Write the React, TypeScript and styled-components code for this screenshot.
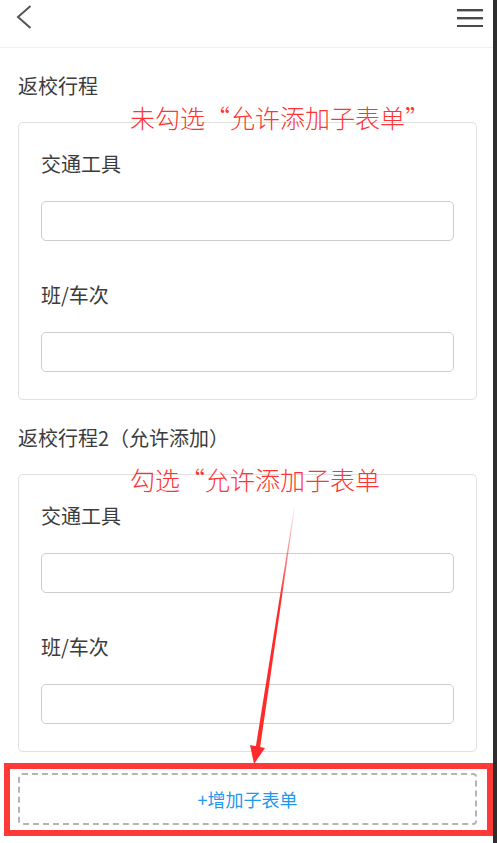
import styled, { createGlobalStyle } from 'styled-components';

const GlobalStyle = createGlobalStyle`
  html, body {
    margin: 0;
    padding: 0;
    background: #ffffff;
  }
  body {
    font-family: "Noto Sans CJK SC", "Noto Sans", sans-serif;
    color: #3c3c3c;
  }
  * {
    box-sizing: border-box;
  }
`;

const Screen = styled.div`
  position: relative;
  width: 497px;
  min-height: 843px;
  background: #fff;
  border-right: 4px solid #2e2e2e;
  overflow: hidden;
`;

const Header = styled.div`
  height: 48px;
  display: flex;
  justify-content: space-between;
  align-items: flex-start;
  padding: 5px 9px 0 16px;
  border-bottom: 1px solid #efefef;
  color: #505050;
`;

const IconButton = styled.span`
  display: flex;
  height: 24px;
  align-items: center;
  justify-content: center;
`;

const Main = styled.div`
  padding: 0 16px 0 18px;
`;

const Section = styled.section`
  display: flex;
  flex-direction: column;
`;

const SectionTitle = styled.div`
  font-size: 20px;
  line-height: 28px;
  padding: 24px 0 22px;
  color: #3c3c3c;
`;

const Card = styled.div`
  border: 1px solid #e0e0e0;
  border-radius: 5px;
  padding: 27px 22px;
  display: flex;
  flex-direction: column;
  gap: 40px;
`;

const Field = styled.div`
  display: flex;
  flex-direction: column;
  gap: 23px;
`;

const Label = styled.div`
  font-size: 20px;
  line-height: 28px;
  color: #3c3c3c;
`;

const Input = styled.input`
  height: 40px;
  width: 100%;
  border: 1px solid #cdcdcd;
  border-radius: 5px;
  background: #fff;
  outline: none;
  font: inherit;
`;

const AddButton = styled.button`
  margin-top: 21px;
  width: 100%;
  height: 52px;
  border: 2px dashed #b4b4b4;
  border-radius: 4px;
  background: #fff;
  color: #1f98ef;
  font-family: "Noto Sans CJK SC", "Noto Sans", sans-serif;
  font-size: 18px;
  display: flex;
  align-items: center;
  justify-content: center;
  padding: 0;
`;

const Note = styled.div<{ top: number }>`
  position: absolute;
  left: 130px;
  top: ${({ top }) => top}px;
  font-size: 25px;
  line-height: 25px;
  font-weight: 300;
  color: #ff3434;
  white-space: nowrap;
  pointer-events: none;
`;

const Highlight = styled.div`
  position: absolute;
  left: 4px;
  top: 763px;
  width: 489px;
  height: 73px;
  border: 6px solid #ff3838;
  pointer-events: none;
`;

const Overlay = styled.svg`
  position: absolute;
  left: 0;
  top: 0;
  pointer-events: none;
`;

const fields = ['交通工具', '班/车次'];

const FormCard = () => (
  <Card>
    {fields.map((f) => (
      <Field key={f}>
        <Label>{f}</Label>
        <Input />
      </Field>
    ))}
  </Card>
);

export default function App() {
  return (
    <>
      <GlobalStyle />
      <Screen lang="zh-CN">
        <Header>
          <IconButton>
            <svg width="16" height="24" viewBox="0 0 16 24">
              <path d="M14.5 1 L2 12 L14.5 23" fill="none" stroke="#555" strokeWidth="2" />
            </svg>
          </IconButton>
          <IconButton>
            <svg width="28" height="20" viewBox="0 0 28 20">
              <rect x="1" y="2" width="26" height="2.4" fill="#4a4a4a" />
              <rect x="1" y="10" width="26" height="2.4" fill="#4a4a4a" />
              <rect x="1" y="18" width="26" height="2.4" fill="#4a4a4a" />
            </svg>
          </IconButton>
        </Header>
        <Main>
          <Section>
            <SectionTitle>返校行程</SectionTitle>
            <FormCard />
          </Section>
          <Section>
            <SectionTitle>返校行程2（允许添加）</SectionTitle>
            <FormCard />
          </Section>
          <AddButton>+增加子表单</AddButton>
        </Main>

        {/* annotations drawn over the screenshot */}
        <Note top={105}>未勾选“允许添加子表单”</Note>
        <Note top={467}>勾选“允许添加子表单</Note>
        <Highlight />
        <Overlay width="497" height="843" viewBox="0 0 497 843">
          <defs>
            <linearGradient id="fade" x1="0" y1="508" x2="0" y2="600" gradientUnits="userSpaceOnUse">
              <stop offset="0" stopColor="#ff2b2b" stopOpacity="0.1" />
              <stop offset="1" stopColor="#ff2b2b" stopOpacity="1" />
            </linearGradient>
          </defs>
          <polygon points="294,508 294.8,508 260,748 255.6,748" fill="url(#fade)" />
          <polygon points="250,745 265,748 254,764" fill="#ff2b2b" />
        </Overlay>
      </Screen>
    </>
  );
}
